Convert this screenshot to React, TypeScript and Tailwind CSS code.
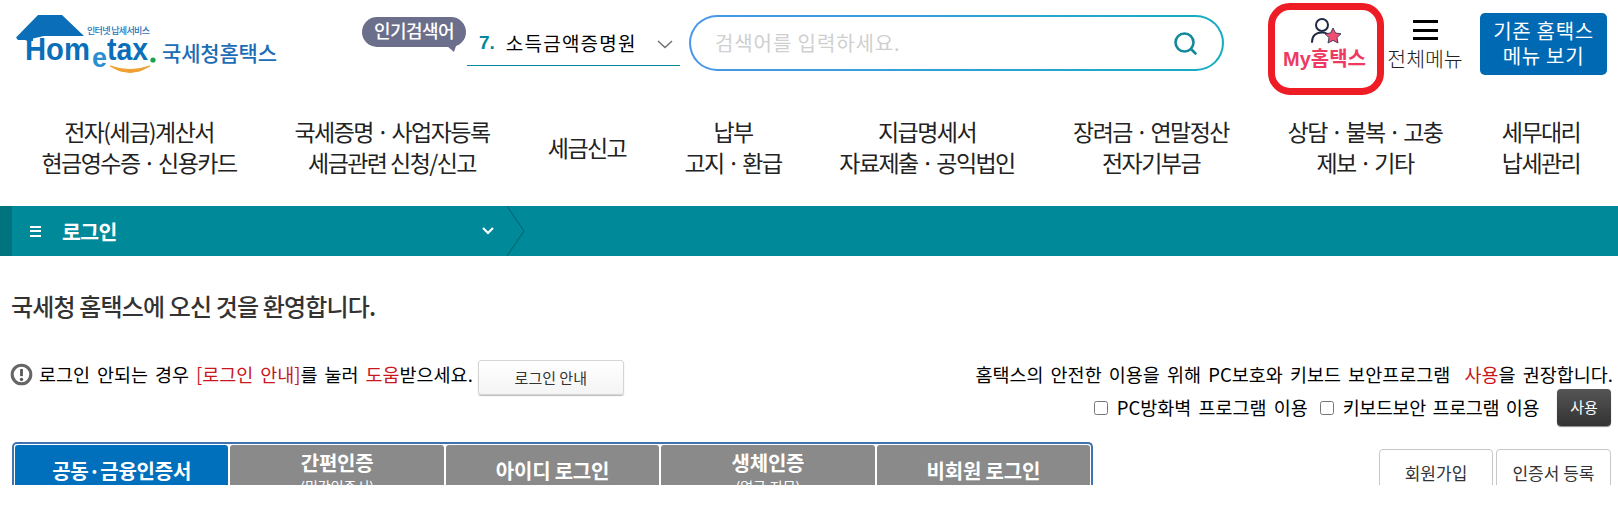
import React from "react";

const KR = "font-['Noto_Sans_CJK_KR','Noto_Sans',sans-serif]";

const navItems = [
  { w: "w-[278px]", lines: ["전자(세금)계산서", "현금영수증 · 신용카드"] },
  { w: "w-[228px]", lines: ["국세증명 · 사업자등록", "세금관련 신청/신고"] },
  { w: "w-[162px]", lines: ["세금신고"] },
  { w: "w-[130px]", lines: ["납부", "고지 · 환급"] },
  { w: "w-[258px]", lines: ["지급명세서", "자료제출 · 공익법인"] },
  { w: "w-[190px]", lines: ["장려금 · 연말정산", "전자기부금"] },
  { w: "w-[238px]", lines: ["상담 · 불복 · 고충", "제보 · 기타"] },
  { w: "w-[114px]", lines: ["세무대리", "납세관리"] },
];

const tabs = [
  { label: "공동·금융인증서", active: true },
  { label: "간편인증", sub: "(민간인증서)" },
  { label: "아이디 로그인" },
  { label: "생체인증", sub: "(얼굴,지문)" },
  { label: "비회원 로그인" },
];

function Logo() {
  return (
    <svg width="270" height="64" viewBox="0 0 270 64" className="block">
      <path d="M2 24.500 L24 2 H48 L70 23 H30 L19 25.500 V28 H14 L11 27 H4 Z" fill="#0a6fb8" />
      <path d="M96 53 Q116 66 136 53 Q116 60 96 53 Z" fill="#f0a030" stroke="#f0a030" strokeWidth="1" />
      <text x="73" y="21" fontSize="9" fontWeight="500" fill="#1c74bb" textLength="63" fontFamily="Noto Sans CJK KR">인터넷 납세서비스</text>
      <text x="11" y="47" fontSize="31" fontWeight="700" fill="#0a6fb8" textLength="65" lengthAdjust="spacingAndGlyphs" fontFamily="Liberation Sans">Hom</text>
      <text x="78" y="54" fontSize="27" fontWeight="700" fill="#2a8fd0" textLength="15" lengthAdjust="spacingAndGlyphs" fontFamily="Liberation Sans">e</text>
      <text x="93" y="47" fontSize="31" fontWeight="700" fill="#0a6fb8" textLength="41" lengthAdjust="spacingAndGlyphs" fontFamily="Liberation Sans">tax</text>
      <circle cx="139" cy="47" r="2.600" fill="#16a34a" />
      <text x="148" y="48" fontSize="21" fontWeight="500" fill="#1c6db5" textLength="115" fontFamily="Noto Sans CJK KR">국세청홈택스</text>
    </svg>
  );
}

function MyIcon() {
  return (
    <svg width="34" height="28" viewBox="0 0 34 28" fill="none">
      <circle cx="13" cy="8" r="6" stroke="#1f2a44" strokeWidth="2" />
      <path d="M3 25 C3 18 8 15.5 13 15.5 C15 15.5 17 16 18.500 17" stroke="#1f2a44" strokeWidth="2" strokeLinecap="round" />
      <path d="M24 11 L26.500 16 L32 16.800 L28 20.600 L29 26 L24 23.400 L19 26 L20 20.600 L16 16.800 L21.500 16 Z" fill="#ef4f75" stroke="#1f2a44" strokeWidth="0.8" />
    </svg>
  );
}

export default function App() {
  return (
    <div className={`${KR} w-[1618px] h-[485px] overflow-hidden bg-white text-black`}>
      {/* top header */}
      <div className="flex items-start h-[100px]">
        <div className="ml-[14px] mt-[13px] w-[270px] shrink-0">
          <Logo />
        </div>
        <div className="relative ml-[78px] mt-[17px] h-[30px] w-[104px] shrink-0 rounded-[15px] bg-[#6b6f8c] text-center text-[18px] leading-[27px] font-medium text-white tracking-[-0.6px]">
          인기검색어
          <div className="absolute right-[10px] bottom-[-5px] h-0 w-0 border-l-[7px] border-r-[2px] border-t-[6px] border-l-transparent border-r-transparent border-t-[#6b6f8c]" />
        </div>
        <div className="ml-[1px] mt-[26px] flex h-[40px] w-[213px] shrink-0 items-center border-b border-[#00889a] pb-[5px] pl-[12px] pr-[6px] text-[19px]">
          <span className="font-bold text-[#00889a] font-['Liberation_Sans']">7.</span>
          <span className="ml-[11px] flex-1 tracking-[1.2px] whitespace-nowrap">소득금액증명원</span>
          <svg width="18" height="10" viewBox="0 0 18 10" fill="none" className="mt-[2px]"><path d="M2 2 L9 8.500 L16 2" stroke="#707070" strokeWidth="1.500" /></svg>
        </div>
        <div className="ml-[9px] mt-[15px] flex h-[56px] w-[535px] shrink-0 items-center justify-between rounded-[28px] border-2 border-transparent pl-[24px] pr-[24px] text-[20px] tracking-[0.9px] text-[#cfcfcf] [background:linear-gradient(#fff,#fff)_padding-box,linear-gradient(90deg,#4a96ea,#14adc0)_border-box]">
          <span>검색어를 입력하세요.</span>
          <svg width="25" height="25" viewBox="0 0 25 25" fill="none"><circle cx="11.500" cy="11.500" r="9" stroke="#14899c" strokeWidth="2.600" /><path d="M18.500 18.500 L22.500 22.500" stroke="#14899c" strokeWidth="2.600" strokeLinecap="round" /></svg>
        </div>
        <div className="ml-[44px] mt-[3px] flex h-[92px] w-[116px] shrink-0 flex-col items-center rounded-[22px] border-[7px] border-[#ee1c25] pt-[7px]">
          <MyIcon />
          <div className="mt-[2px] pr-[3px] text-[20px] font-bold leading-[24px] text-[#ee3a62] whitespace-nowrap font-['Liberation_Sans','Noto_Sans_CJK_KR']">My홈택스</div>
        </div>
        <div className="ml-[3px] mt-[20px] flex w-[76px] shrink-0 flex-col items-center">
          <div className="flex h-[20px] w-[25px] flex-col justify-between">
            <div className="h-[3px] bg-black" />
            <div className="h-[3px] bg-black" />
            <div className="h-[3px] bg-black" />
          </div>
          <div className="mt-[6px] text-[20.500px] leading-[24px] whitespace-nowrap text-[#222] font-light">전체메뉴</div>
        </div>
        <div className="ml-[17px] mt-[13px] flex h-[62px] w-[127px] shrink-0 flex-col items-center justify-center rounded-[5px] bg-[#0069b4] pb-[2px] text-[20px] leading-[25px] tracking-[0.7px] text-white">
          <div>기존 홈택스</div>
          <div>메뉴 보기</div>
        </div>
      </div>

      {/* main nav */}
      <div className="flex h-[106px] items-start pt-[16px]">
        {navItems.map((item) => (
          <div key={item.lines[0]} className={`${item.w} flex h-[62px] shrink-0 flex-col items-center justify-center text-center text-[23px] leading-[31px] tracking-[-1.55px] text-[#222]`}>
            {item.lines.map((l) => (
              <div key={l} className="whitespace-nowrap">{l}</div>
            ))}
          </div>
        ))}
      </div>

      {/* breadcrumb bar */}
      <div className="flex h-[50px] items-center bg-[#008998] text-white">
        <div className="h-full w-[12px] bg-[#00737f]" />
        <div className="ml-[18px] flex h-[11px] w-[11px] flex-col justify-between">
          <div className="h-[2px] bg-white" />
          <div className="h-[2px] bg-white" />
          <div className="h-[2px] bg-white" />
        </div>
        <span className="ml-[21px] w-[378px] text-[20.500px] font-bold tracking-[-0.6px]">로그인</span>
        <svg width="14" height="10" viewBox="0 0 14 10" fill="none" className="ml-[41px]"><path d="M2 2 L7 7 L12 2" stroke="#fff" strokeWidth="2.200" /></svg>
        <svg width="20" height="50" viewBox="0 0 20 50" fill="none" className="ml-[11px]"><path d="M1 0 L18 25 L1 50" stroke="#005f69" strokeWidth="1" /></svg>
      </div>

      {/* welcome */}
      <div className="pl-[11px] pt-[32px] text-[24px] leading-[36px] font-medium tracking-[-0.85px] text-[#333]">국세청 홈택스에 오신 것을 환영합니다.</div>

      {/* notices */}
      <div className="mt-[6px] flex h-[96px] items-start justify-between">
        <div className="flex items-start pl-[10px] pt-[26px] text-[18.500px] leading-[36px] [word-spacing:2.800px]">
          <svg width="23" height="23" viewBox="0 0 21 21" fill="none" className="mr-[6px] mt-[7px] shrink-0"><circle cx="10.500" cy="10.500" r="8.500" stroke="#666" strokeWidth="2.800" /><path d="M10.500 5.500 V12" stroke="#555" strokeWidth="2.500" /><circle cx="10.500" cy="15" r="1.500" fill="#555" /></svg>
          <span>로그인 안되는 경우 <span className="text-[#c8171e]">[로그인 안내]</span>를 눌러 <span className="text-[#c8171e]">도움</span>받으세요.</span>
          <button className="ml-[5px] mt-[4px] h-[35px] w-[146px] rounded-[3px] border border-[#d5d5d5] bg-gradient-to-b from-white to-[#f4f4f4] text-[15px] leading-none text-[#333] shadow-[0_1px_1px_#bbb]">로그인 안내</button>
        </div>
        <div className="flex flex-col items-end pr-[5px] pt-[29px]">
          <div className="text-[18.500px] leading-[30px] [word-spacing:3px]">홈택스의 안전한 이용을 위해 PC보호와 키보드 보안프로그램 &nbsp;<span className="text-[#c8171e]">사용</span>을 권장합니다.</div>
          <div className="mr-[2px] flex items-center text-[18.500px] [word-spacing:3px]">
            <input type="checkbox" className="mr-[9px] h-[14px] w-[14px]" readOnly />
            <span>PC방화벽 프로그램 이용</span>
            <input type="checkbox" className="ml-[12px] mr-[9px] h-[14px] w-[14px]" readOnly />
            <span className="tracking-[-0.4px]">키보드보안 프로그램 이용</span>
            <button className="ml-[18px] h-[37px] w-[54px] rounded-[4px] bg-gradient-to-b from-[#555] to-[#333] text-[15px] text-white shadow-[0_1px_1px_#888]">사용</button>
          </div>
        </div>
      </div>

      {/* login tabs */}
      <div className="mt-[16px] flex items-start justify-between pl-[12px] pr-[7px]">
        <div className="flex h-[60px] w-[1081px] gap-[2px] rounded-t-[5px] border-2 border-b-0 border-[#3f73b0] px-[1px] pt-[1px]">
          {tabs.map((t) => (
            <div key={t.label} className={`flex h-[58px] flex-1 flex-col items-center justify-start rounded-t-[3px] text-white ${t.active ? "bg-[#0070bd]" : "bg-[#8a8a8a]"} ${t.sub ? "pt-[5px]" : "pt-[13px]"}`}>
              <div className="text-[20px] font-bold leading-[26px] tracking-[-0.2px]">{t.label}</div>
              {t.sub && <div className="text-[14px] leading-[20px]">{t.sub}</div>}
            </div>
          ))}
        </div>
        <div className="mt-[7px] flex gap-[3px]">
          <div className="flex h-[70px] w-[114px] justify-center rounded-t-[4px] border border-[#c8c8c8] pt-[10px] text-[17px] text-[#333]">회원가입</div>
          <div className="flex h-[70px] w-[115px] justify-center rounded-t-[4px] border border-[#c8c8c8] pt-[10px] text-[17px] text-[#333]">인증서 등록</div>
        </div>
      </div>
    </div>
  );
}
